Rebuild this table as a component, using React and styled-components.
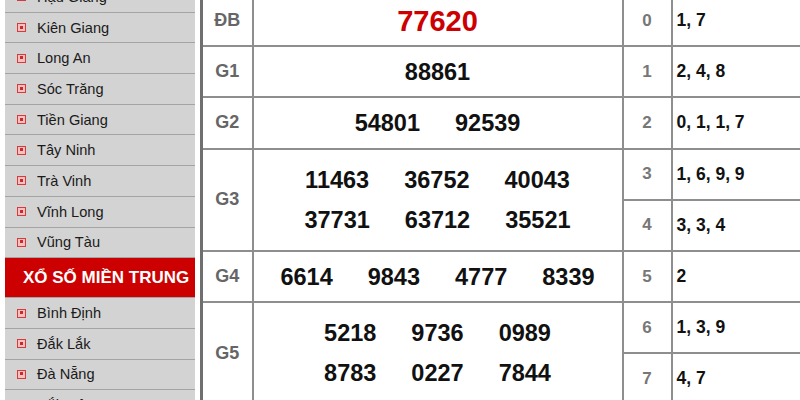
import React from 'react';
import styled, { createGlobalStyle } from 'styled-components';

const GlobalStyle = createGlobalStyle`
  body {
    margin: 0;
    background: #fff;
    font-family: "Liberation Sans", Arial, sans-serif;
    overflow: hidden;
  }
`;

const Page = styled.div`
  display: flex;
  align-items: flex-start;
  gap: 5px;
  padding-left: 5px;
`;

const Sidebar = styled.nav`
  width: 190px;
  flex: none;
  margin-top: -18px;
  background: #d3d3d3;
`;

const MenuItem = styled.a`
  display: flex;
  align-items: center;
  gap: 11px;
  box-sizing: border-box;
  height: 30.7px;
  padding-left: 12px;
  border-bottom: 1px solid #a4a4a4;
  font-size: 14.6px;
  color: #1a1a1a;
  text-decoration: none;
`;

const Bullet = styled.span`
  position: relative;
  flex: none;
  box-sizing: border-box;
  width: 9px;
  height: 9px;
  border: 1.5px solid #d83a3c;
  background: #f4c0c0;

  &::after {
    content: '';
    position: absolute;
    left: 1.5px;
    top: 1.5px;
    width: 3px;
    height: 3px;
    background: #c92a2e;
  }
`;

const SectionTitle = styled.div`
  display: flex;
  align-items: center;
  box-sizing: border-box;
  height: 40px;
  padding-left: 18px;
  background: #cc0000;
  border-bottom: 1px solid #a4a4a4;
  color: #fff;
  font-size: 17px;
  font-weight: bold;
`;

const Results = styled.table`
  flex: none;
  width: 599px;
  margin-top: -6px;
  border-collapse: collapse;
  table-layout: fixed;
  border-left: 3px solid #6f6f6f;
  border-right: 2px solid #7a7a7a;
`;

const Cell = styled.td`
  height: 49.2px;
  padding: 0;
  border: 2px solid #8e8e8e;
  font-weight: bold;
`;

const Label = styled(Cell)`
  text-align: center;
  color: #666;
  font-size: 18px;
`;

const Prize = styled(Cell)`
  color: ${(p) => (p.$special ? '#cc0000' : '#111')};
  font-size: ${(p) => (p.$special ? '29px' : '23.5px')};
`;

const NumLine = styled.div`
  display: flex;
  justify-content: center;
  gap: 35px;
  line-height: 40px;
`;

const Head = styled(Cell)`
  text-align: center;
  color: #777;
  font-size: 17px;
`;

const Tail = styled(Cell)`
  padding-left: 4px;
  color: #111;
  font-size: 17.5px;
`;

const south = [
  'Hậu Giang', 'Kiên Giang', 'Long An', 'Sóc Trăng', 'Tiền Giang',
  'Tây Ninh', 'Trà Vinh', 'Vĩnh Long', 'Vũng Tàu'
];

const central = ['Bình Định', 'Đắk Lắk', 'Đà Nẵng', 'Đắk Nông'];

const prizes = [
  { label: 'ĐB', lines: [['77620']], special: true },
  { label: 'G1', lines: [['88861']] },
  { label: 'G2', lines: [['54801', '92539']] },
  { label: 'G3', lines: [['11463', '36752', '40043'], ['37731', '63712', '35521']] },
  { label: 'G4', lines: [['6614', '9843', '4777', '8339']] },
  { label: 'G5', lines: [['5218', '9736', '0989'], ['8783', '0227', '7844']] }
];

const tails = ['1, 7', '2, 4, 8', '0, 1, 1, 7', '1, 6, 9, 9', '3, 3, 4', '2', '1, 3, 9', '4, 7'];

function buildRows() {
  const rows = [];
  let head = 0;

  prizes.forEach((prize) => {
    const span = prize.lines.length;

    for (let i = 0; i < span; i += 1) {
      rows.push(
        <tr key={head}>
          {i === 0 && (
            <>
              <Label rowSpan={span}>{prize.label}</Label>
              <Prize rowSpan={span} $special={prize.special}>
                {prize.lines.map((line) => (
                  <NumLine key={line[0]}>
                    {line.map((n) => <span key={n}>{n}</span>)}
                  </NumLine>
                ))}
              </Prize>
            </>
          )}
          <Head>{head}</Head>
          <Tail>{tails[head]}</Tail>
        </tr>
      );
      head += 1;
    }
  });

  return rows;
}

const App = () => (
  <>
    <GlobalStyle />
    <Page>
      <Sidebar>
        {south.map((name) => (
          <MenuItem key={name}>
            <Bullet />
            {name}
          </MenuItem>
        ))}
        <SectionTitle>XỔ SỐ MIỀN TRUNG</SectionTitle>
        {central.map((name) => (
          <MenuItem key={name}>
            <Bullet />
            {name}
          </MenuItem>
        ))}
      </Sidebar>
      <Results>
        <colgroup>
          <col style={{ width: 51 }} />
          <col style={{ width: 370 }} />
          <col style={{ width: 49 }} />
          <col style={{ width: 129 }} />
        </colgroup>
        <tbody>{buildRows()}</tbody>
      </Results>
    </Page>
  </>
);

export default App;
